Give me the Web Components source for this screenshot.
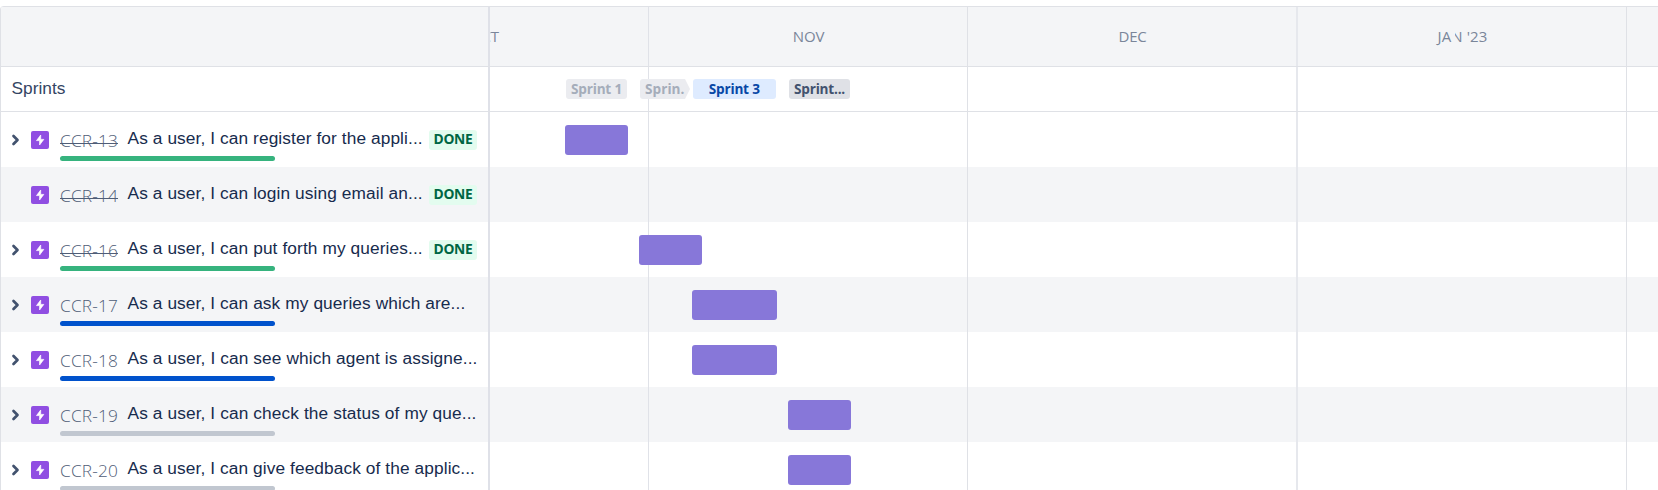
<!DOCTYPE html>
<html lang="en">
<head>
<meta charset="utf-8">
<title>Roadmap</title>
<style>
html,body{margin:0;height:490px;overflow:hidden;background:#fff}
body{font-family:"Liberation Sans",Arial,sans-serif;color:#172b4d}
</style>
</head>
<body>
<road-map></road-map>
<script>
const UI = '"Open Sans","Noto Sans",sans-serif';

// Text that spreads its letters to fill a given width.
class FitText extends HTMLElement {
  connectedCallback() {
    if (!this.shadowRoot) this.attachShadow({mode:'open'}).innerHTML =
      `<style>:host{display:inline-block;white-space:nowrap;flex:none}span{display:inline-block;text-decoration:inherit;text-decoration-skip-ink:none}</style><span><slot></slot></span>`;
    const w = +this.getAttribute('w'), s = this.shadowRoot.querySelector('span');
    this.style.width = w + 'px';
    const n = this.textContent.length;
    s.style.letterSpacing = ((w - s.getBoundingClientRect().width) / n).toFixed(4) + 'px';
  }
}

class EpicIcon extends HTMLElement {
  constructor() {
    super();
    this.attachShadow({mode:'open'}).innerHTML = `<style>:host{display:block;width:18px;height:18px}svg{display:block}</style>
    <svg width="18" height="18" viewBox="0 0 18 18"><rect width="18" height="18" rx="2" fill="#904ee2"/><path d="M9.7 4 5.5 9.6h3.1V14l4.2-5.6H9.7z" fill="#fff" stroke="#fff" stroke-width=".7" stroke-linejoin="round"/></svg>`;
  }
}

class StatusBadge extends HTMLElement {
  constructor() {
    super();
    this.attachShadow({mode:'open'}).innerHTML = `<style>:host{display:flex;justify-content:center;width:48px;height:20px;border-radius:3px;background:#e3fcef;color:#006644;font:700 13.8px/18px ${UI}}</style><slot></slot>`;
  }
}

class SprintPill extends HTMLElement {
  connectedCallback() {
    const a = k => this.getAttribute(k), arrow = this.hasAttribute('arrow');
    this.attachShadow({mode:'open'}).innerHTML = `<style>
    :host{display:flex;justify-content:center;flex:none;box-sizing:border-box;margin-left:${a('gap')}px;width:${a('width')}px;height:20px;border-radius:3px;background:${a('bg')};color:${a('fg')};font:700 13.6px/20px ${UI};
    ${arrow ? 'justify-content:flex-start;padding-left:5px;clip-path:polygon(0 0,45px 0,50px 10px,45px 20px,0 20px);' : ''}}
    </style><slot></slot>`;
  }
}

// The strip right of the divider, with month rules behind its content.
class TimeTrack extends HTMLElement {
  constructor() {
    super();
    this.attachShadow({mode:'open'}).innerHTML = `<style>
    :host{display:flex;box-sizing:border-box;flex:1;height:100%;align-items:flex-start;border-left:2px solid #dfe1e8;
    background:linear-gradient(#e0e2e8,#e0e2e8) 158px 0/1px 100% no-repeat,linear-gradient(#dfe1e6,#dfe1e6) 477px 0/1px 100% no-repeat,linear-gradient(#e6e8ed,#e6e8ed) 806px 0/2px 100% no-repeat,linear-gradient(#dfe1e6,#dfe1e6) 1136px 0/1px 100% no-repeat}
    </style><slot></slot>`;
  }
}

class MonthHeader extends HTMLElement {
  connectedCallback() {
    this.attachShadow({mode:'open'}).innerHTML = `<style>
    :host{display:flex;flex:none;box-sizing:border-box;height:61px;border-top:1px solid #dfe1e6;border-bottom:1px solid #dfe1e6;background:#f4f5f7;font:400 15px/58px ${UI};color:#7a869a}
    .side{width:487px;flex:none}
    .months{display:grid;grid-template-columns:158px 319px 330px 330px 31px;overflow:hidden;height:59px}
    .m{text-align:center;overflow:hidden;white-space:nowrap}
    .first{display:flex}.first fit-text{margin-left:-20px}
    .nov{padding-left:2px}.dec{padding-left:1px}
    .jan{position:relative;padding-left:1px}
    .jan i{position:absolute;left:155.2px;top:20px;width:3.2px;height:18px;background:#f4f5f7}
    </style><div class="side"></div><time-track><div class="months">
    <div class="m first"><fit-text w="29">OCT</fit-text></div>
    <div class="m nov"><fit-text w="31.5">NOV</fit-text></div>
    <div class="m dec"><fit-text w="28">DEC</fit-text></div>
    <div class="m jan"><fit-text w="50">JAN '23</fit-text><i></i></div></div></time-track>`;
  }
}

class SprintRow extends HTMLElement {
  connectedCallback() {
    this.attachShadow({mode:'open'}).innerHTML = `<style>
    :host{display:flex;flex:none;box-sizing:border-box;height:45px;border-bottom:1px solid #dfe1e6;background:#fff}
    .side{box-sizing:border-box;width:487px;flex:none;padding-left:10.5px;font-size:17.3px;line-height:42px;color:#344563}
    sprint-pill{margin-top:12px}
    </style><div class="side"><fit-text w="54">Sprints</fit-text></div><time-track>
    <sprint-pill gap="76" width="61" bg="#ebecf0" fg="#a5adba"><fit-text w="51">Sprint 1</fit-text></sprint-pill>
    <sprint-pill arrow gap="13" width="50" bg="#ebecf0" fg="#a5adba"><fit-text w="39.5">Sprin.</fit-text></sprint-pill>
    <sprint-pill gap="3" width="82.5" bg="#deebff" fg="#0747a6"><fit-text w="51">Sprint 3</fit-text></sprint-pill>
    <sprint-pill gap="13.5" width="61" bg="#dfe1e6" fg="#42526e"><fit-text w="51">Sprint...</fit-text></sprint-pill>
    </time-track>`;
  }
}

class EpicRow extends HTMLElement {
  connectedCallback() {
    const d = this.data;
    this.attachShadow({mode:'open'}).innerHTML = `<style>
    :host{display:flex;height:55px;flex:none;background:${d.odd ? '#f4f5f7' : '#fff'}}
    .side{box-sizing:border-box;width:487px;flex:none;display:grid;grid-template-columns:30px 29px 67.5px 1fr 58px;grid-template-rows:44px 5px;align-items:start}
    .chev{display:block;margin:21px 0 0 9px}
    epic-icon{margin-top:19px}
    .key{font:300 17.3px/24px ${UI};color:#4f5d77;margin-top:17px}
    .done fit-text{text-decoration:underline 1px;text-underline-offset:-4px}
    .title{font-size:17.3px;line-height:20px;margin-top:16px;white-space:nowrap;color:#172b4d}
    status-badge{margin-top:18px;margin-left:-1px}
    .progress{grid-column:3/5;grid-row:2;width:215px;height:5px;border-radius:2.5px;background:${d.color}}
    .bar{flex:none;margin-top:13px;height:29.5px;border-radius:3px;background:#8777d9;width:${d.w}px;margin-left:${d.x - 490}px}
    </style>
    <div class="side">
      <div>${d.expand ? '<svg class="chev" width="12" height="14" viewBox="0 0 12 14"><path d="M3.5 3 7.5 7l-4 4" fill="none" stroke="#42526e" stroke-width="2.7" stroke-linecap="round" stroke-linejoin="round"/></svg>' : ''}</div>
      <epic-icon></epic-icon>
      <div class="key ${d.done ? 'done' : ''}"><fit-text w="58">${d.key}</fit-text></div>
      <div class="title"><fit-text w="${d.tw}">${d.title}</fit-text></div>
      <div>${d.done ? '<status-badge><fit-text w="39">DONE</fit-text></status-badge>' : ''}</div>
      ${d.color ? '<div class="progress"></div>' : ''}
    </div>
    <time-track>${d.w ? '<div class="bar"></div>' : ''}</time-track>`;
  }
}

class RoadMap extends HTMLElement {
  connectedCallback() {
    const root = this.attachShadow({mode:'open'});
    root.innerHTML = `<style>:host{display:flex;flex-direction:column;box-sizing:border-box;margin-top:6px;width:1658px;height:484px;overflow:hidden;border-left:1px solid #dfe1e6;border-top-left-radius:4px}</style><month-header></month-header><sprint-row></sprint-row>`;
    const G = '#36b37e', B = '#0052cc', N = '#c1c7d0';
    [
      {key:'CCR-13', title:'As a user, I can register for the appli...', tw:295.2, done:1, expand:1, color:G, x:564.5, w:63.5},
      {key:'CCR-14', title:'As a user, I can login using email an...', tw:295.2, done:1},
      {key:'CCR-16', title:'As a user, I can put forth my queries...', tw:295.2, done:1, expand:1, color:G, x:639, w:63},
      {key:'CCR-17', title:'As a user, I can ask my queries which are...', tw:337.8, expand:1, color:B, x:692, w:84.7},
      {key:'CCR-18', title:'As a user, I can see which agent is assigne...', tw:350, expand:1, color:B, x:692, w:84.7},
      {key:'CCR-19', title:'As a user, I can check the status of my que...', tw:349, expand:1, color:N, x:788, w:63},
      {key:'CCR-20', title:'As a user, I can give feedback of the applic...', tw:347.5, expand:1, color:N, x:788, w:63}
    ].forEach((d, i) => {
      const r = document.createElement('epic-row');
      r.data = {...d, odd: i % 2};
      root.append(r);
    });
  }
}

customElements.define('epic-icon', EpicIcon);
customElements.define('status-badge', StatusBadge);
customElements.define('sprint-pill', SprintPill);
customElements.define('time-track', TimeTrack);
customElements.define('fit-text', FitText);
customElements.define('month-header', MonthHeader);
customElements.define('sprint-row', SprintRow);
customElements.define('epic-row', EpicRow);
customElements.define('road-map', RoadMap);
</script>
</body>
</html>
